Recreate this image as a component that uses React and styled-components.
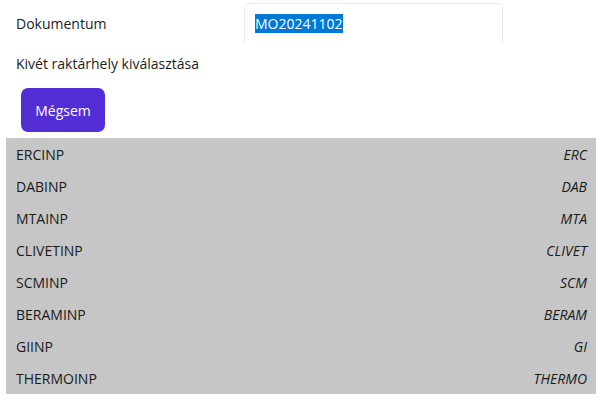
import React from 'react';
import styled, { createGlobalStyle } from 'styled-components';

const GlobalStyle = createGlobalStyle`
  html, body {
    margin: 0;
    padding: 0;
    background: #ffffff;
  }

  body {
    font-family: "Open Sans", "Noto Sans", "Liberation Sans", sans-serif;
    font-size: 14px;
    color: #1c1c1c;
  }
`;

const Page = styled.div`
  width: 608px;
  padding: 0 12px 0 6px;
  box-sizing: border-box;
`;

const FieldRow = styled.div`
  display: flex;
  align-items: flex-start;
  padding-top: 3px;
  padding-left: 10px;
`;

const FieldLabel = styled.div`
  width: 228px;
  flex: none;
  line-height: 20px;
  padding-top: 11px;
`;

const FieldBox = styled.div`
  width: 259px;
  height: 40px;
  box-sizing: border-box;
  border: 1px solid #ececec;
  border-bottom: none;
  border-radius: 5px 5px 0 0;
  padding: 10px 0 0 10px;
  line-height: 19px;
`;

const Selected = styled.span`
  background: #0078d7;
  color: #ffffff;
  display: inline-block;
  height: 19px;
  line-height: 19px;
`;

const Title = styled.div`
  margin-top: 11px;
  padding-left: 10px;
  line-height: 20px;
`;

const CancelButton = styled.button`
  margin: 14px 0 0 15px;
  width: 84px;
  height: 44px;
  border: none;
  border-radius: 7px;
  background: #532ed6;
  color: #ffffff;
  font-family: inherit;
  font-size: 14px;
  display: block;
  cursor: pointer;
`;

const List = styled.div`
  margin-top: 6px;
  background: #c6c6c6;
  width: 590px;
`;

const Row = styled.div`
  display: flex;
  justify-content: space-between;
  align-items: center;
  height: 32px;
  padding: 0 9px 0 10px;
`;

const Code = styled.span`
  color: #1a1a1a;
`;

const Short = styled.span`
  font-style: italic;
  color: #1a1a1a;
`;

const stores = ['ERC', 'DAB', 'MTA', 'CLIVET', 'SCM', 'BERAM', 'GI', 'THERMO'];

export default function App() {
  return (
    <Page>
      <GlobalStyle />
      <FieldRow>
        <FieldLabel>Dokumentum</FieldLabel>
        <FieldBox>
          <Selected>MO20241102</Selected>
        </FieldBox>
      </FieldRow>
      <Title>Kivét raktárhely kiválasztása</Title>
      <CancelButton>Mégsem</CancelButton>
      <List>
        {stores.map((s) => (
          <Row key={s}>
            <Code>{s}INP</Code>
            <Short>{s}</Short>
          </Row>
        ))}
      </List>
    </Page>
  );
}
